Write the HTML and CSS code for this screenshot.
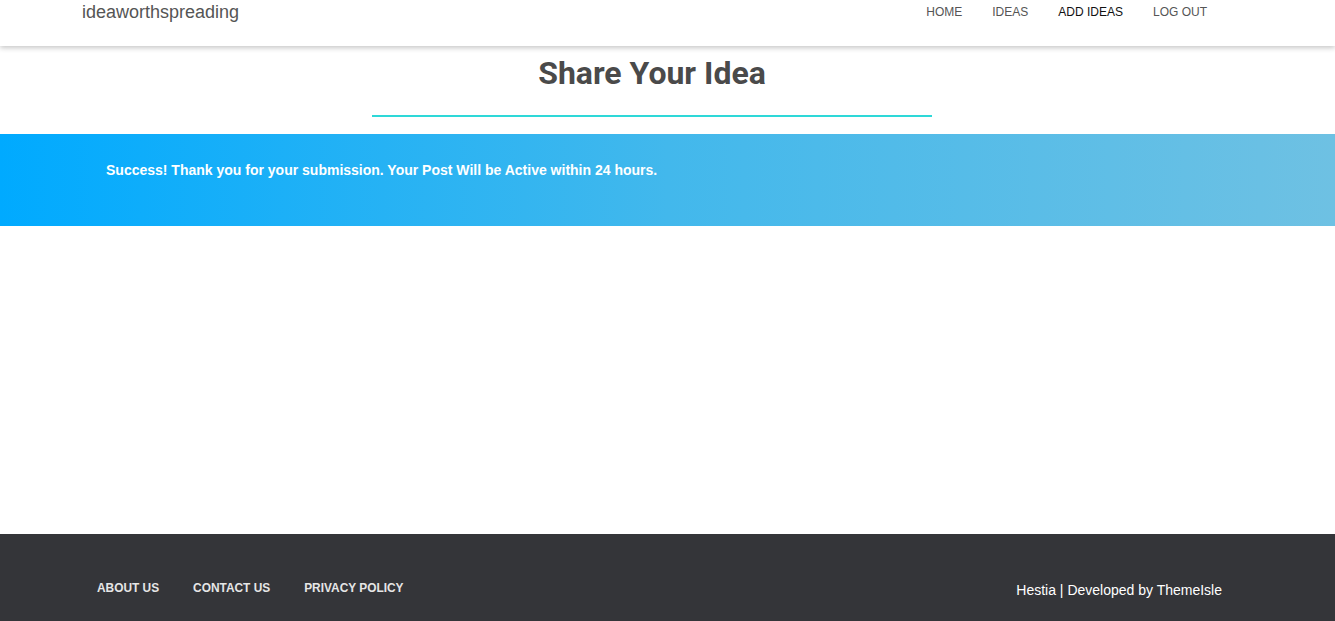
FILE: index.html
```html
<!DOCTYPE html>
<html>
<head>
<meta charset="utf-8">
<link rel="stylesheet" href="styles.css">
</head>
<body>
<header class="topbar">
  <div class="brand">ideaworthspreading</div>
  <nav class="nav">
    <a class="nav-link">HOME</a>
    <a class="nav-link">IDEAS</a>
    <a class="nav-link active">ADD IDEAS</a>
    <a class="nav-link">LOG OUT</a>
  </nav>
</header>
<main class="main">
  <h1 class="title">Share Your Idea</h1>
  <div class="rule"></div>
  <section class="notice">
    <p class="notice-text">Success! Thank you for your submission. Your Post Will be Active within 24 hours.</p>
  </section>
  <div class="spacer"></div>
</main>
<footer class="footer">
  <nav class="footer-nav">
    <a class="footer-link">ABOUT US</a>
    <a class="footer-link">CONTACT US</a>
    <a class="footer-link">PRIVACY POLICY</a>
  </nav>
  <div class="credit">Hestia | Developed by ThemeIsle</div>
</footer>
</body>
</html>
```
FILE: styles.css
```css
* { box-sizing: border-box; }
html, body { margin: 0; padding: 0; }
body {
  font-family: "Liberation Sans", Arial, sans-serif;
  background: #fff;
  width: 1335px;
  height: 621px;
  overflow: hidden;
  display: flex;
  flex-direction: column;
}
.topbar {
  height: 46px;
  display: flex;
  justify-content: space-between;
  align-items: flex-start;
  padding: 0 128px 0 82px;
  box-shadow: 0 2px 5px rgba(0,0,0,0.22);
  position: relative;
  z-index: 2;
  background: #fff;
}
.brand {
  font-size: 18px;
  color: #555;
  line-height: 24px;
}
.nav {
  display: flex;
  padding-top: 5px;
}
.nav-link {
  font-size: 12px;
  color: #555;
  line-height: 14px;
  margin-left: 30px;
}
.nav-link:first-child { margin-left: 0; }
.nav-link.active { color: #111; }
.main {
  display: flex;
  flex-direction: column;
  align-items: center;
  flex: 1;
}
.title {
  font-family: Roboto, "Liberation Sans", sans-serif;
  font-weight: 700;
  font-size: 32px;
  color: #4a4a4a;
  margin: 0 31px 0 0;
  line-height: 40px;
  padding-top: 7px;
}
.rule {
  width: 560px;
  height: 2px;
  background: #2ed8d8;
  margin: 22px 31px 0 0;
}
.notice {
  align-self: stretch;
  height: 92px;
  margin-top: 17px;
  background: linear-gradient(90deg, #00aaff 0%, #42b8ec 50%, #6ec1e3 100%);
  display: flex;
  align-items: center;
  padding-left: 106px;
}
.notice-text {
  margin: -20px 0 0 0;
  color: #fff;
  font-weight: 700;
  font-size: 14px;
  line-height: 16px;
}
.spacer { flex: 1; }
.footer {
  height: 87px;
  background: #343539;
  display: flex;
  justify-content: space-between;
  align-items: flex-start;
  padding: 0 113px 0 97px;
}
.footer-nav {
  display: flex;
  padding-top: 47px;
}
.footer-link {
  color: #e6e6e6;
  font-weight: 700;
  font-size: 11.9px;
  line-height: 14px;
  margin-right: 34px;
}
.credit {
  color: #fff;
  font-size: 14px;
  line-height: 16px;
  padding-top: 48px;
}
```
